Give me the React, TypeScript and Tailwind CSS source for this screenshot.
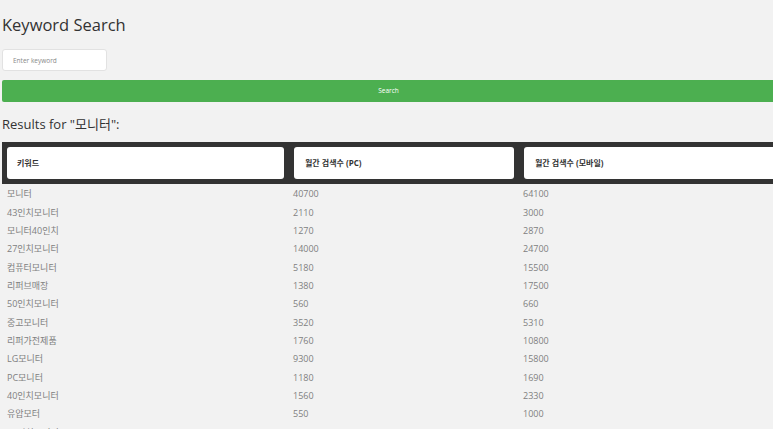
const rows: [string, string, string][] = [
  ["모니터", "40700", "64100"],
  ["43인치모니터", "2110", "3000"],
  ["모니터40인치", "1270", "2870"],
  ["27인치모니터", "14000", "24700"],
  ["컴퓨터모니터", "5180", "15500"],
  ["리퍼브매장", "1380", "17500"],
  ["50인치모니터", "560", "660"],
  ["중고모니터", "3520", "5310"],
  ["리퍼가전제품", "1760", "10800"],
  ["LG모니터", "9300", "15800"],
  ["PC모니터", "1180", "1690"],
  ["40인치모니터", "1560", "2330"],
  ["유압모터", "550", "1000"],
  ["32인치모니터", "2900", "4400"],
];

const font = { fontFamily: '"Open Sans", "Noto Sans CJK KR", sans-serif' };

export default function App() {
  return (
    <div className="h-[429px] w-[773px] overflow-hidden bg-[#f2f2f2] px-[2px]" style={font}>
      <h1 className="pt-[12px] text-[16.5px] leading-[26px] text-[#333]">Keyword Search</h1>

      <input
        type="text"
        placeholder="Enter keyword"
        className="mt-[11px] block h-[22px] w-[105px] rounded-[3px] border border-[#e2e2e2] bg-white px-[10px] text-[6.5px] text-[#555] placeholder:text-[#888] outline-none"
      />

      <button className="mt-[9px] block h-[22px] w-[790px] rounded-[2px] bg-[#4caf50] pr-[17px] text-[6.5px] text-white">
        Search
      </button>

      <h2 className="mt-[12px] text-[13px] leading-[20px] text-[#333]">Results for "모니터":</h2>

      <div className="mt-[8px] w-[820px]">
        <div className="grid grid-cols-[277px_220px_260px] gap-x-[10px] bg-[#333] p-[5px]">
          <div className="flex h-[32px] items-center rounded-[3px] bg-white px-[10px] text-[8px] font-bold text-[#333]">
            키워드
          </div>
          <div className="flex h-[32px] items-center rounded-[3px] bg-white px-[11px] text-[8px] font-bold text-[#333]">
            월간 검색수 (PC)
          </div>
          <div className="flex h-[32px] items-center rounded-[3px] bg-white px-[11px] text-[8px] font-bold text-[#333]">
            월간 검색수 (모바일)
          </div>
        </div>
        <div className="pt-[1px]">
          {rows.map(([k, pc, mo]) => (
            <div
              key={k}
              className="grid h-[18.33px] grid-cols-[286px_230px_260px] items-center pl-[5px] text-[9px] text-[#808080]"
            >
              <span>{k}</span>
              <span>{pc}</span>
              <span>{mo}</span>
            </div>
          ))}
        </div>
      </div>
    </div>
  );
}
